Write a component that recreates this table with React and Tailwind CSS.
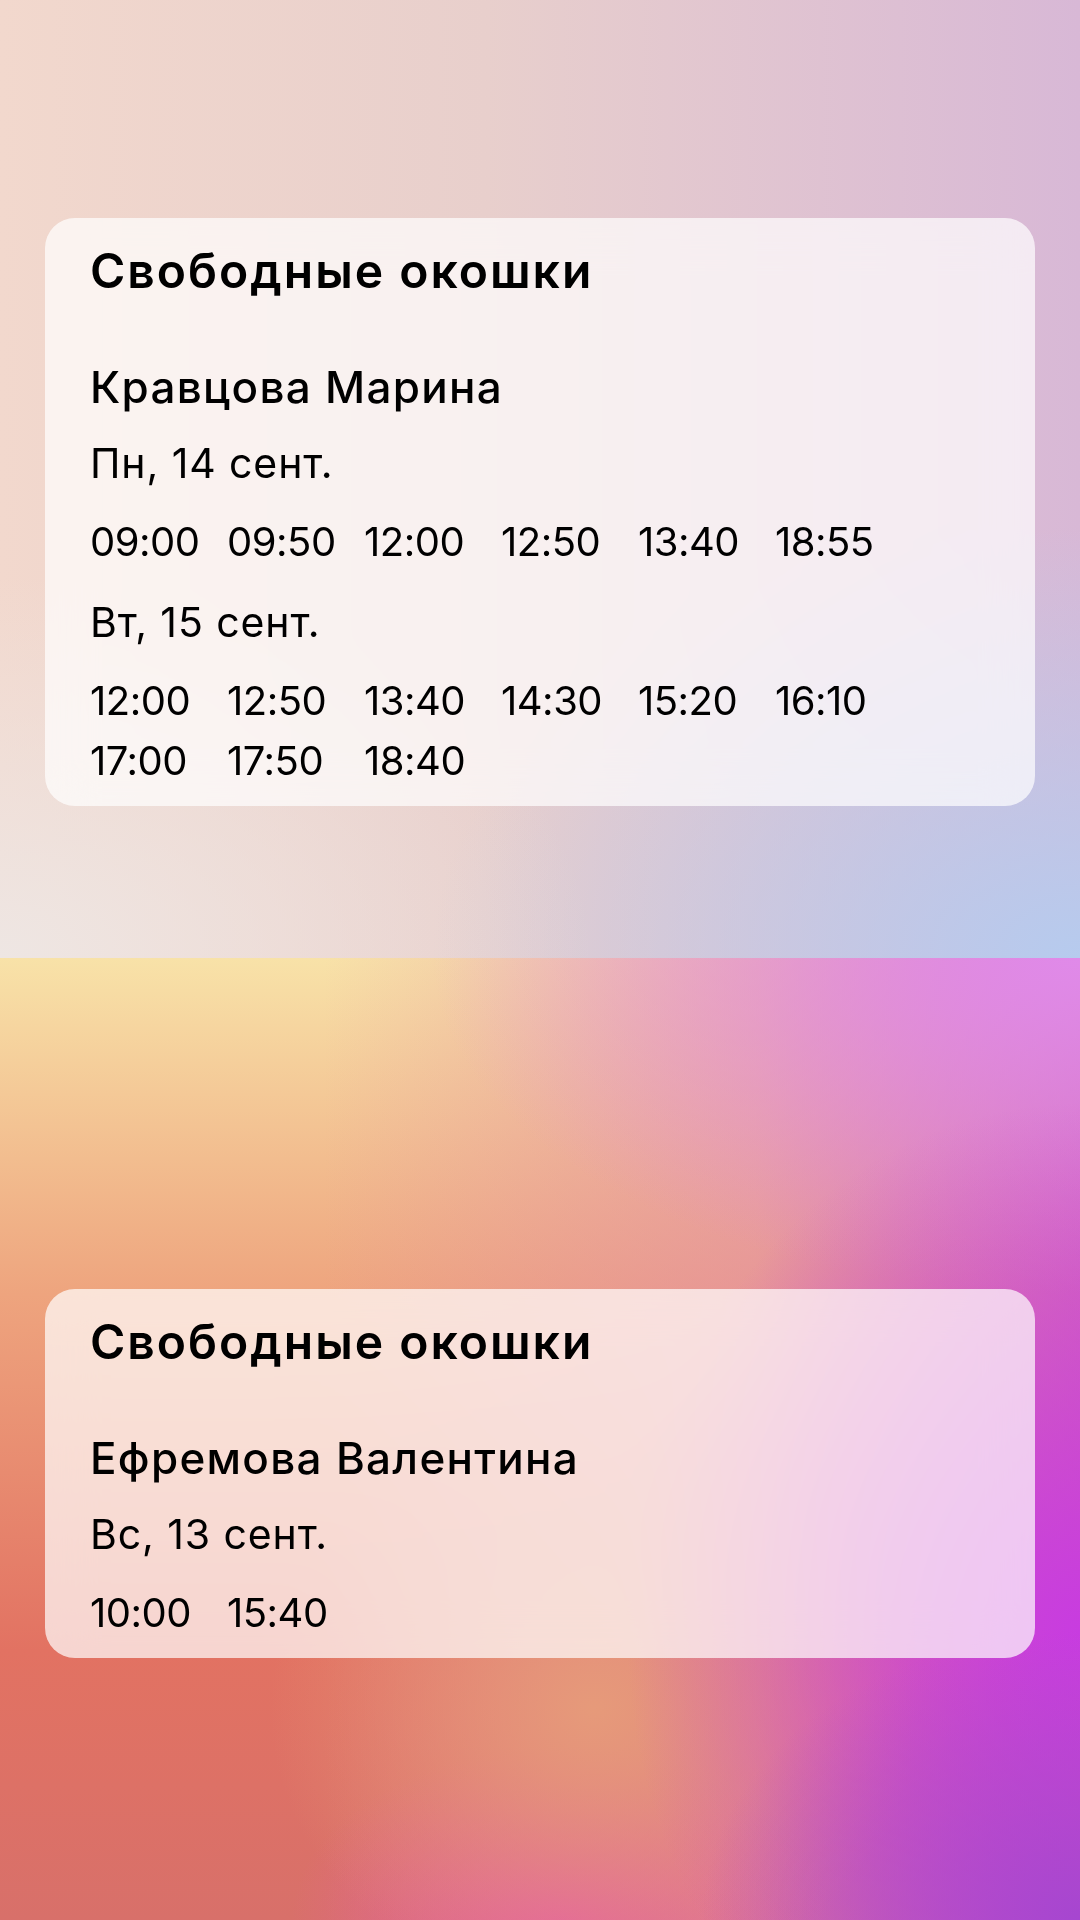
import React from 'react';

const widgets = [
  {
    id: 'top',
    name: 'Кравцова Марина',
    days: [
      { label: 'Пн, 14 сент.', slots: ['09:00', '09:50', '12:00', '12:50', '13:40', '18:55'] },
      { label: 'Вт, 15 сент.', slots: ['12:00', '12:50', '13:40', '14:30', '15:20', '16:10', '17:00', '17:50', '18:40'] }
    ]
  },
  {
    id: 'bottom',
    name: 'Ефремова Валентина',
    days: [{ label: 'Вс, 13 сент.', slots: ['10:00', '15:40'] }]
  }
];

function SlotsCard({ widget }) {
  return (
    <div className="mx-[45px] rounded-[30px] bg-white/70 backdrop-blur-xl pl-[45px] pr-[30px] pt-[24px] pb-[15px] text-black">
      <h2 className="text-[48px] leading-[58px] font-semibold tracking-[2px]">Свободные окошки</h2>
      <div className="mt-[61px] text-[44px] leading-[52px] font-medium tracking-[1.3px]">{widget.name}</div>
      {widget.days.map((day) => (
        <div key={day.label}>
          <div className="mt-[26px] text-[41px] leading-[48px] tracking-[0.9px]">{day.label}</div>
          <div className="mt-[25px] flex flex-wrap">
            {day.slots.map((slot, i) => (
              <span key={slot + i} className="w-[137px] text-[40px] leading-[60px] tracking-[-0.5px]">
                {slot}
              </span>
            ))}
          </div>
        </div>
      ))}
    </div>
  );
}

export default function App() {
  return (
    <div className="w-[1080px] h-[1920px] flex flex-col overflow-hidden font-['Inter','Noto_Sans',sans-serif]">
      <section className="h-[958px] pt-[218px] bg-[radial-gradient(60%_45%_at_100%_100%,#b6cbee_0%,rgba(182,203,238,0)_100%),radial-gradient(55%_40%_at_0%_100%,#eee6e3_0%,rgba(238,230,227,0)_100%),linear-gradient(to_right,#f2d8cd_0%,#e8cfcc_45%,#d8b8d6_100%)]">
        <SlotsCard widget={widgets[0]} />
      </section>
      <section className="h-[962px] pt-[331px] bg-[radial-gradient(35%_30%_at_100%_100%,#a646d0_0%,rgba(166,70,208,0)_100%),radial-gradient(42%_55%_at_100%_70%,#c83ce0_0%,rgba(200,60,224,0)_100%),radial-gradient(60%_35%_at_100%_0%,#e08ae9_0%,rgba(224,138,233,0)_100%),radial-gradient(30%_30%_at_55%_78%,#e69a7a_0%,rgba(230,154,122,0)_100%),radial-gradient(25%_18%_at_52%_100%,#e4609e_0%,rgba(228,96,158,0)_100%),linear-gradient(to_right,rgba(226,140,160,0)_30%,rgba(226,140,170,0.55)_70%,rgba(200,80,210,0.7)_100%),linear-gradient(to_bottom,#f8e2a8_0%,#eea47e_35%,#e27262_72%,#d8706a_100%)]">
        <SlotsCard widget={widgets[1]} />
      </section>
    </div>
  );
}
